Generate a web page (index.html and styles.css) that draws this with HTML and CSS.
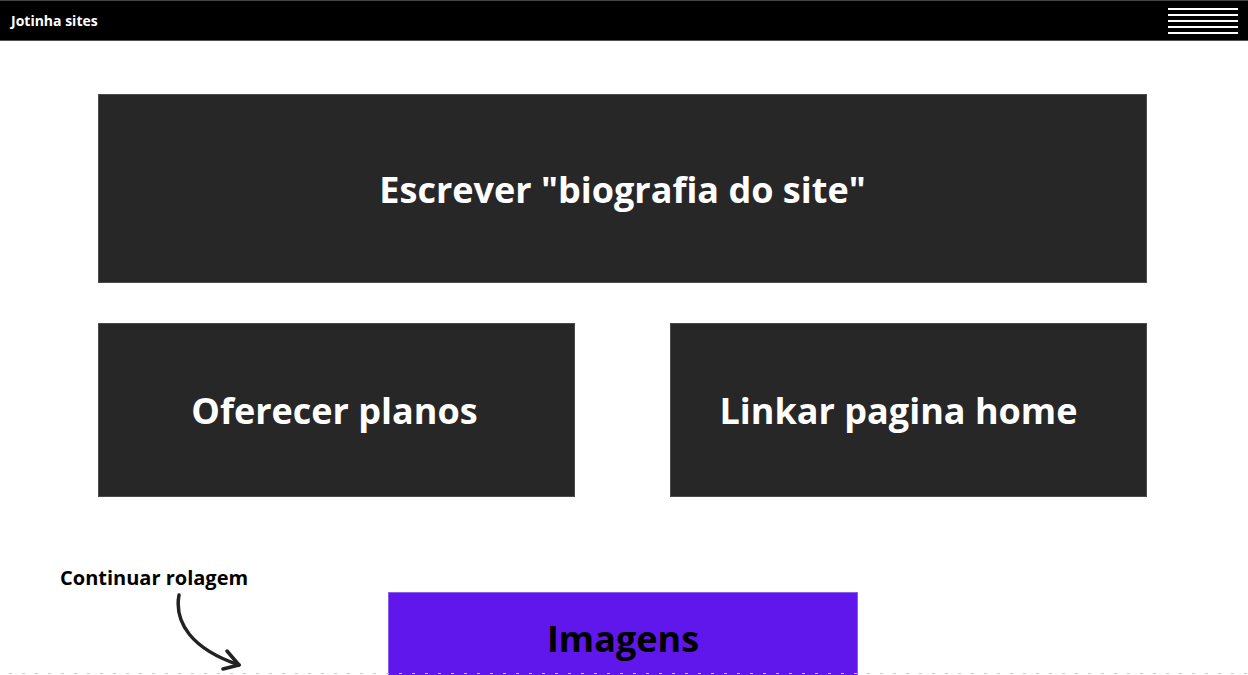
FILE: index.html
```html
<!DOCTYPE html>
<html lang="pt">
<head>
<meta charset="utf-8">
<link rel="stylesheet" href="styles.css">
</head>
<body>
<header class="topbar">
  <span class="brand">Jotinha sites</span>
  <div class="burger"><i></i><i></i><i></i><i></i><i></i></div>
</header>
<main class="content">
  <section class="card card-wide">Escrever "biografia do site"</section>
  <div class="row">
    <section class="card card-half card-plans">Oferecer planos</section>
    <section class="card card-half card-home">Linkar pagina home</section>
  </div>
  <div class="bottom">
    <div class="scroll-hint">
      <span class="hint-text">Continuar rolagem</span>
      <svg class="arrow" width="80" height="80" viewBox="0 0 80 80">
        <path d="M5 4 C0 32 18 58 65 74" fill="none" stroke="#222" stroke-width="3.5" stroke-linecap="round"/>
        <path d="M53 60 L65 74 L49 78" fill="none" stroke="#222" stroke-width="3.5" stroke-linecap="round" stroke-linejoin="round"/>
      </svg>
    </div>
    <section class="images">Imagens</section>
  </div>
</main>
<div class="dots"></div>
</body>
</html>
```
FILE: styles.css
```css
html, body {
  margin: 0;
  padding: 0;
  background: #fff;
  font-family: "Open Sans", "Liberation Sans", sans-serif;
  overflow: hidden;
  height: 675px;
}
.topbar {
  height: 39px;
  background: #000;
  border-top: 1px solid #444;
  border-bottom: 1px solid #555;
  display: flex;
  align-items: center;
  justify-content: space-between;
  padding: 0 10px 0 11px;
}
.brand {
  color: #fff;
  font-weight: 700;
  font-size: 14px;
}
.burger {
  width: 70px;
  display: flex;
  flex-direction: column;
  gap: 4px;
}
.burger i {
  display: block;
  height: 2px;
  background: #fff;
}
.content {
  padding: 53px 101px 0 98px;
}
.card {
  background: #272727;
  color: #fff;
  font-weight: 700;
  font-size: 36px;
  display: flex;
  align-items: center;
  justify-content: center;
  box-shadow: 0 0 0 1px #4a4a4a inset;
}
.card-wide {
  height: 189px;
  padding-top: 2px;
  box-sizing: border-box;
}
.row {
  display: flex;
  justify-content: space-between;
  margin-top: 40px;
}
.card-half {
  width: 477px;
  height: 174px;
  box-sizing: border-box;
}
.card-plans {
  padding-right: 4px;
}
.card-home {
  padding-right: 20px;
}
.bottom {
  display: flex;
  margin-top: 95px;
}
.scroll-hint {
  margin-left: -38px;
  width: 328px;
  display: flex;
  flex-direction: column;
  margin-top: -28px;
}
.hint-text {
  font-weight: 700;
  font-size: 20px;
  color: #000;
}
.arrow {
  margin-left: 114px;
  margin-top: 0;
}
.images {
  width: 470px;
  height: 92px;
  background: #5f17eb;
  color: #000;
  font-weight: 700;
  font-size: 36px;
  display: flex;
  align-items: center;
  justify-content: center;
  box-shadow: 0 0 0 1px #8a5cf0 inset;
}
.dots {
  position: absolute;
  left: 0;
  right: 0;
  top: 673px;
  height: 1px;
  background: repeating-linear-gradient(90deg, transparent 0 9px, #ccc 9px 12px, transparent 12px 13px);
}
```
